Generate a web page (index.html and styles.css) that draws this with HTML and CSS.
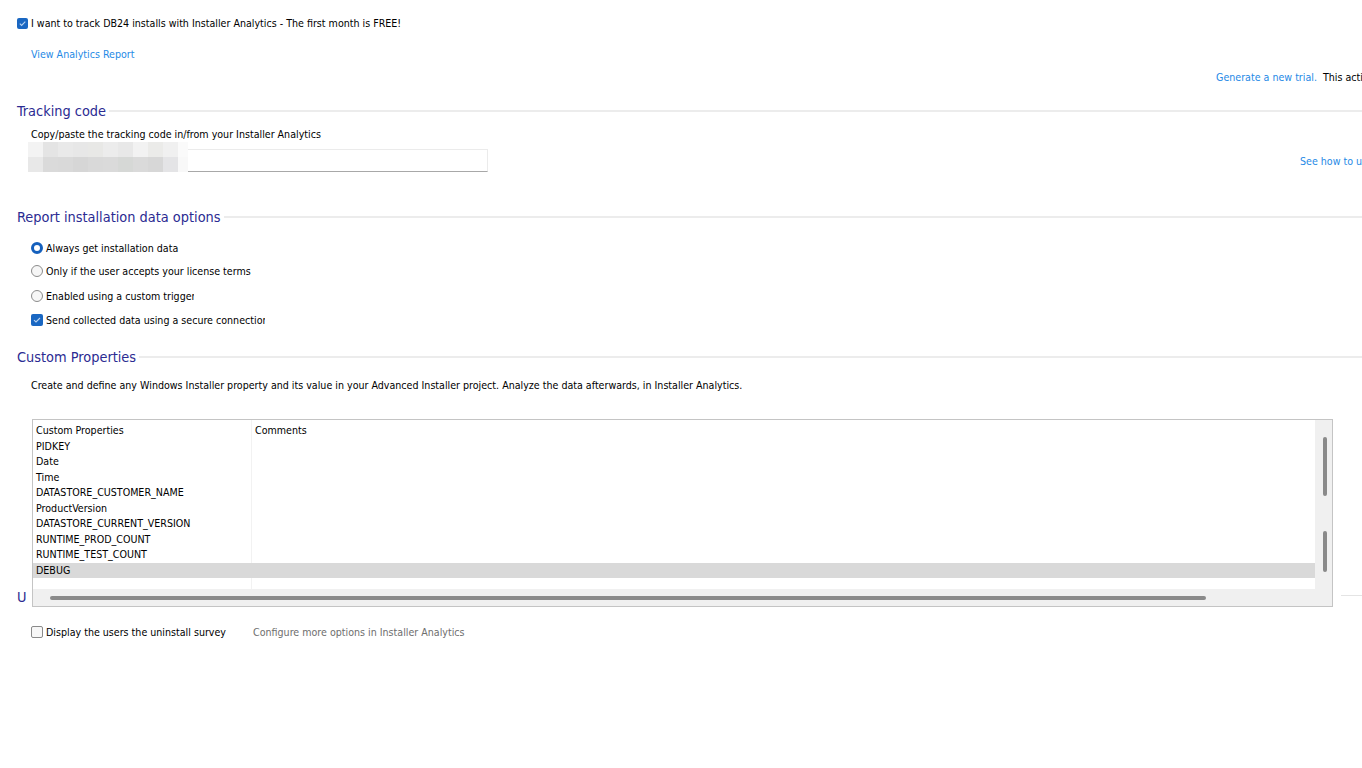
FILE: index.html
```html
<!DOCTYPE html>
<html>
<head>
<meta charset="utf-8">
<link rel="stylesheet" href="styles.css">
</head>
<body>
<div class="page">
  <div class="row check-row">
    <span class="cb cb-on"><svg viewBox="0 0 11 11" width="11" height="11"><path d="M2.8 5.6 L4.6 7.4 L8.3 3.6" fill="none" stroke="#b9d3f0" stroke-width="1.1"/></svg></span>
    <span class="txt">I want to track DB24 installs with Installer Analytics - The first month is FREE!</span>
  </div>
  <div class="row link-row"><a class="link">View Analytics Report</a></div>
  <div class="row trial-row"><a class="link">Generate a new trial.</a><span class="txt trial-note">This action</span></div>

  <div class="heading h-track"><span class="h-text">Tracking code</span><span class="h-line"></span></div>
  <div class="row desc copy-row">Copy/paste the tracking code in/from your Installer Analytics</div>
  <div class="track-row">
    <div class="blur">
      <i></i><i></i><i></i><i></i><i></i><i></i><i></i><i></i><i></i><i></i><i></i>
      <i></i><i></i><i></i><i></i><i></i><i></i><i></i><i></i><i></i><i></i><i></i>
    </div>
    <div class="code-input"></div>
    <a class="link see-how">See how to use</a>
  </div>

  <div class="heading h-report"><span class="h-text">Report installation data options</span><span class="h-line"></span></div>
  <div class="opt opt1"><span class="radio radio-on"></span><span class="txt">Always get installation data</span></div>
  <div class="opt opt2"><span class="radio"></span><span class="txt">Only if the user accepts your license terms</span></div>
  <div class="opt opt3"><span class="radio"></span><span class="txt clip clip-trigger">Enabled using a custom trigger</span></div>
  <div class="opt opt4"><span class="cb cb-on cb12"><svg viewBox="0 0 12 12" width="12" height="12"><path d="M3 6.1 L5 8 L9 4" fill="none" stroke="#b9d3f0" stroke-width="1.1"/></svg></span><span class="txt clip clip-secure">Send collected data using a secure connection</span></div>

  <div class="heading h-custom"><span class="h-text">Custom Properties</span><span class="h-line"></span></div>
  <div class="row desc custom-desc">Create and define any Windows Installer property and its value in your Advanced Installer project. Analyze the data afterwards, in Installer Analytics.</div>

  <div class="table-row">
    <div class="u-col">U</div>
    <div class="grid-box">
      <div class="grid-main">
        <div class="list">
          <div class="col-line"></div>
          <div class="lrow"><span class="c1">Custom Properties</span><span class="c2">Comments</span></div>
          <div class="lrow"><span class="c1">PIDKEY</span></div>
          <div class="lrow"><span class="c1">Date</span></div>
          <div class="lrow"><span class="c1">Time</span></div>
          <div class="lrow"><span class="c1">DATASTORE_CUSTOMER_NAME</span></div>
          <div class="lrow"><span class="c1">ProductVersion</span></div>
          <div class="lrow"><span class="c1">DATASTORE_CURRENT_VERSION</span></div>
          <div class="lrow"><span class="c1">RUNTIME_PROD_COUNT</span></div>
          <div class="lrow"><span class="c1">RUNTIME_TEST_COUNT</span></div>
          <div class="lrow sel"><span class="c1">DEBUG</span></div>
        </div>
        <div class="vscroll">
          <div class="vthumb vthumb1"></div>
          <div class="vthumb vthumb2"></div>
        </div>
      </div>
      <div class="hscroll"><div class="hthumb"></div></div>
    </div>
    <div class="u-line"></div>
  </div>

  <div class="opt survey-row">
    <span class="cb cb-off"></span><span class="txt survey-label">Display the users the uninstall survey</span>
    <span class="txt muted">Configure more options in Installer Analytics</span>
  </div>
</div>
</body>
</html>
```
FILE: styles.css
```css
html, body {
  margin: 0;
  padding: 0;
  background: #ffffff;
  width: 1362px;
  height: 768px;
  overflow: hidden;
}
.page {
  padding: 15px 0 0 17px;
  font-family: "DejaVu Sans Condensed", "DejaVu Sans", sans-serif;
  font-size: 10.6px;
  color: #000;
  white-space: nowrap;
}
.row {
  height: 16px;
  line-height: 16px;
  display: flex;
  align-items: center;
}
.txt { line-height: 16px; }
.link {
  color: #1f8ae6;
  text-decoration: none;
  cursor: pointer;
}
.check-row { gap: 3px; }
.link-row { margin-top: 15px; padding-left: 14px; }
.trial-row { margin-top: 7px; padding-left: 1199px; }
.trial-note { margin-left: 6px; }

.cb {
  display: inline-block;
  width: 11px;
  height: 11px;
  border-radius: 2px;
  box-sizing: border-box;
  flex: none;
}
.cb svg { display: block; }
.cb-on { background: #1a67c2; }
.cb12 { width: 12px; height: 12px; }
.cb-off {
  width: 12px;
  height: 12px;
  border: 1px solid #8a8a8a;
  background: #f7f7f7;
}

.heading {
  display: flex;
  align-items: center;
  height: 20px;
  line-height: 20px;
  font-size: 14.4px;
  color: #2b2b92;
}
.h-line {
  flex: 1;
  height: 2px;
  background: #ececec;
  margin-left: 3px;
  margin-top: -1px;
}
.h-track { margin-top: 16px; }
.copy-row { margin-top: 5px; padding-left: 14px; }
.desc { padding-left: 14px; }

.track-row {
  display: flex;
  align-items: flex-end;
  height: 30px;
  margin-left: 11px;
}
.blur {
  display: grid;
  grid-template-columns: repeat(10, 15px) 10px;
  grid-template-rows: 15px 15px;
  flex: none;
}
.blur i:nth-child(1) { background: #f3f3f3; }
.blur i:nth-child(2) { background: #e4e4e4; }
.blur i:nth-child(3) { background: #e9e9e9; }
.blur i:nth-child(4) { background: #e7e7e7; }
.blur i:nth-child(5) { background: #e8e8e6; }
.blur i:nth-child(6) { background: #ececec; }
.blur i:nth-child(7) { background: #e8e8e8; }
.blur i:nth-child(8) { background: #f2f2f2; }
.blur i:nth-child(9) { background: #ebebe9; }
.blur i:nth-child(10) { background: #f0f0f0; }
.blur i:nth-child(11) { background: #fafafa; }
.blur i:nth-child(12) { background: #e8e8e8; }
.blur i:nth-child(13) { background: #dadada; }
.blur i:nth-child(14) { background: #d9d9d9; }
.blur i:nth-child(15) { background: #d6d6d6; }
.blur i:nth-child(16) { background: #d9d9d9; }
.blur i:nth-child(17) { background: #dadada; }
.blur i:nth-child(18) { background: #d6d8d6; }
.blur i:nth-child(19) { background: #dadada; }
.blur i:nth-child(20) { background: #d7d7d7; }
.blur i:nth-child(21) { background: #e4e4e6; }
.blur i:nth-child(22) { background: #f8f8f8; }
.code-input {
  width: 300px;
  height: 23px;
  box-sizing: border-box;
  border-top: 1px solid #ebebeb;
  border-right: 1px solid #ebebeb;
  border-bottom: 1px solid #a8a8a8;
  background: #fff;
  flex: none;
}
.see-how {
  align-self: center;
  margin-left: 812px;
  margin-top: 8px;
  line-height: 16px;
}

.h-report { margin-top: 35px; }
.opt {
  display: flex;
  align-items: center;
  height: 16px;
  padding-left: 14px;
  gap: 3px;
}
.opt1 { margin-top: 13px; }
.opt2 { margin-top: 7px; }
.opt3 { margin-top: 9px; }
.opt4 { margin-top: 8px; }
.radio {
  width: 12px;
  height: 12px;
  border-radius: 50%;
  box-sizing: border-box;
  border: 1px solid #8c8c8c;
  background: #f6f6f6;
  flex: none;
}
.radio-on {
  border: 3.5px solid #1560bd;
  background: #fff;
}
.clip { overflow: hidden; }
.clip-trigger { width: 148px; }
.clip-secure { width: 219px; }

.h-custom { margin-top: 19px; }
.custom-desc { margin-top: 10px; }

.table-row {
  display: flex;
  align-items: flex-end;
  margin-top: 26px;
}
.u-col {
  width: 15px;
  flex: none;
  font-size: 14.4px;
  line-height: 20px;
  color: #2b2b92;
}
.grid-box {
  width: 1301px;
  height: 188px;
  box-sizing: border-box;
  border: 1px solid #c4c4c4;
  background: #f0f0f0;
  display: flex;
  flex-direction: column;
  flex: none;
}
.grid-main {
  display: flex;
  height: 170px;
}
.list {
  position: relative;
  flex: 1;
  background: #fff;
  padding-top: 3px;
  box-sizing: border-box;
}
.col-line {
  position: absolute;
  left: 218px;
  top: 0;
  bottom: 0;
  width: 1px;
  background: #f2f2f2;
}
.lrow {
  height: 15.5px;
  line-height: 15.5px;
  display: flex;
  padding-left: 3px;
}
.lrow .c1 { width: 219px; }
.sel { background: #d9d9d9; position: relative; }
.vscroll {
  width: 17px;
  flex: none;
  display: flex;
  flex-direction: column;
  align-items: center;
}
.vthumb {
  width: 4px;
  background: #8a8a8a;
  border-radius: 2px;
  margin-left: 2px;
}
.vthumb1 { margin-top: 17px; height: 59px; }
.vthumb2 { margin-top: 35px; height: 41px; }
.hscroll {
  height: 17px;
  display: flex;
  align-items: center;
}
.hthumb {
  margin-left: 17px;
  width: 1156px;
  height: 4px;
  background: #8a8a8a;
  border-radius: 2px;
}
.u-line {
  flex: 1;
  height: 1px;
  background: #e4e4e4;
  margin-left: 8px;
  margin-bottom: 11px;
}

.survey-row { margin-top: 17px; }
.survey-label { width: 204px; }
.muted { color: #6e6e6e; }
```
